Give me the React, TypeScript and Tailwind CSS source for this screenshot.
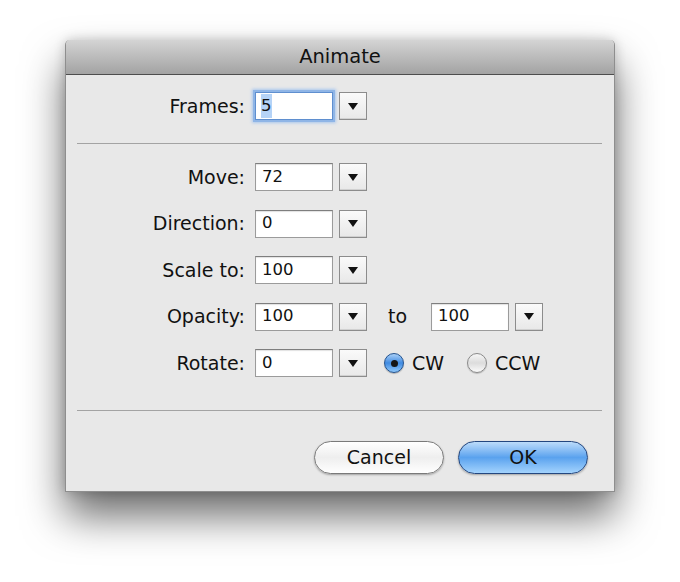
import React from 'react';

const font = { fontFamily: '"DejaVu Sans", "Liberation Sans", sans-serif' };

/** Small square popup button with a black down-triangle */
const DropButton = () => (
  <div className="flex h-[28px] w-[28px] items-center justify-center border border-[#8c8c8c] bg-gradient-to-b from-[#fafafa] to-[#e8e8e8] shadow-[inset_0_-1px_0_#d0d0d0]">
    <svg width="10" height="7" viewBox="0 0 10 7">
      <polygon points="0,0 10,0 5,7" fill="#111" />
    </svg>
  </div>
);

const Field = ({ value, focused = false }: { value: string; focused?: boolean }) => (
  <div
    className={
      focused
        ? 'flex h-[28px] w-[78px] items-center border border-[#5f8fcf] bg-white pl-[5px] text-[16.5px] text-[#111] shadow-[0_0_0_2px_#8fb5e6,0_0_3px_3px_#a9c7ee]'
        : 'flex h-[28px] w-[78px] items-center border border-[#9b9b9b] border-t-[#7e7e7e] bg-white pl-[6px] text-[16.5px] text-[#111] shadow-[inset_0_1px_1px_rgba(0,0,0,0.12)]'
    }
  >
    {focused ? <span className="bg-[#b5d3f7]">{value}</span> : value}
  </div>
);

const Label = ({ children }: { children: React.ReactNode }) => (
  <div className="w-[180px] pr-[1px] text-right text-[19px] text-[#111]">{children}</div>
);

const Row = ({ label, value, children }: { label: string; value: string; children?: React.ReactNode }) => (
  <div className="flex h-[28px] items-center">
    <Label>{label}</Label>
    <div className="ml-[9px]">
      <Field value={value} />
    </div>
    <div className="ml-[6px]">
      <DropButton />
    </div>
    {children}
  </div>
);

const Radio = ({ checked }: { checked: boolean }) =>
  checked ? (
    <div className="flex h-[20px] w-[20px] items-center justify-center rounded-full border border-[#24538f] bg-gradient-to-b from-[#a9d0f7] via-[#3f8ae0] to-[#8fc8fb] shadow-[0_1px_1px_rgba(0,0,0,0.25)]">
      <div className="h-[7px] w-[7px] rounded-full bg-[#151515]" />
    </div>
  ) : (
    <div className="h-[20px] w-[20px] rounded-full border border-[#8a8a8a] bg-gradient-to-b from-[#f6f6f6] via-[#dcdcdc] to-[#fbfbfb] shadow-[0_1px_1px_rgba(0,0,0,0.2)]" />
  );

export default function App() {
  return (
    <div className="h-[582px] w-[680px] bg-white pl-[65px] pt-[40px]" style={font}>
      <div className="flex h-[452px] w-[550px] flex-col overflow-hidden rounded-t-[5px] border-x border-b border-[#8e8e8e] bg-[#e8e8e8] shadow-[0_24px_42px_rgba(0,0,0,0.58),0_0_12px_rgba(0,0,0,0.2)]">
        {/* Title bar */}
        <div className="flex h-[35px] shrink-0 items-center justify-center border-b border-[#4d4d4d] bg-gradient-to-b from-[#d4d4d4] to-[#a3a3a3] text-[19.5px] text-[#111]">
          Animate
        </div>

        {/* Body */}
        <div className="flex flex-1 flex-col pt-[17px]">
          <div className="flex h-[28px] items-center">
            <Label>Frames:</Label>
            <div className="ml-[9px]">
              <Field value="5" focused />
            </div>
            <div className="ml-[6px]">
              <DropButton />
            </div>
          </div>

          <div className="ml-[11px] mr-[12px] mt-[23px] h-px bg-[#a3a3a3]" />

          <div className="mt-[19px] flex flex-col gap-[18.5px]">
            <Row label="Move:" value="72" />
            <Row label="Direction:" value="0" />
            <Row label="Scale to:" value="100" />
            <Row label="Opacity:" value="100">
              <span className="ml-[21px] text-[19px] text-[#111]">to</span>
              <div className="ml-[24px]">
                <Field value="100" />
              </div>
              <div className="ml-[6px]">
                <DropButton />
              </div>
            </Row>
            <Row label="Rotate:" value="0">
              <div className="ml-[17px]">
                <Radio checked />
              </div>
              <span className="ml-[8px] text-[19px] text-[#111]">CW</span>
              <div className="ml-[23px]">
                <Radio checked={false} />
              </div>
              <span className="ml-[8px] text-[19px] text-[#111]">CCW</span>
            </Row>
          </div>

          <div className="ml-[11px] mr-[12px] mt-[33px] h-px bg-[#a3a3a3]" />

          <div className="mr-[26px] mt-[30px] flex justify-end gap-[14px]">
            <button className="flex h-[33px] w-[130px] items-center justify-center rounded-full border border-[#7a7a7a] bg-gradient-to-b from-[#ffffff] via-[#eeeeee] to-[#ffffff] text-[19px] text-[#111] shadow-[0_1px_2px_rgba(0,0,0,0.3)]">
              Cancel
            </button>
            <button className="flex h-[33px] w-[130px] items-center justify-center rounded-full border border-[#24477f] bg-gradient-to-b from-[#bcdcfa] via-[#5aa2ee] to-[#a3d3fd] text-[19px] text-[#111] shadow-[0_1px_2px_rgba(0,0,0,0.3)]">
              OK
            </button>
          </div>
        </div>
      </div>
    </div>
  );
}
